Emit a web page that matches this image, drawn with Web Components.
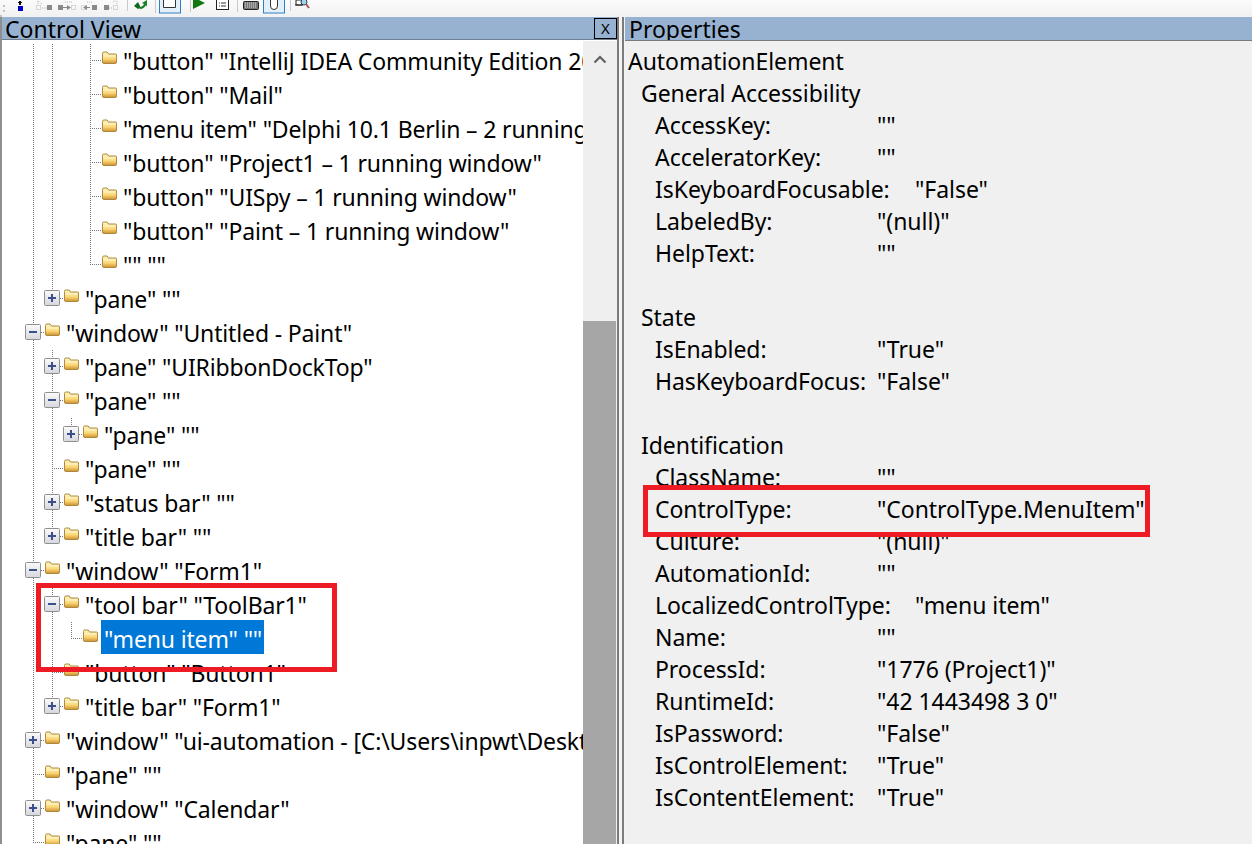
<!DOCTYPE html>
<html>
<head>
<meta charset="utf-8">
<title>UISpy</title>
<style>
html, body { margin: 0; height: 100%; overflow: hidden; background: #fff; }
body { font-family: "Noto Sans", "Open Sans", sans-serif; color: #000; }
</style>
</head>
<body>
<spy-app>
  <spy-toolbar slot="toolbar"></spy-toolbar>

  <spy-panel slot="left" heading="Control View" closable>
    <spy-tree>
      <tree-row guides="0,1" level="3" line="tee">"button" "IntelliJ IDEA Community Edition 2022.1 – 1 running window"</tree-row>
      <tree-row guides="0,1" level="3" line="tee">"button" "Mail"</tree-row>
      <tree-row guides="0,1" level="3" line="tee">"menu item" "Delphi 10.1 Berlin – 2 running windows"</tree-row>
      <tree-row guides="0,1" level="3" line="tee">"button" "Project1 – 1 running window"</tree-row>
      <tree-row guides="0,1" level="3" line="tee">"button" "UISpy – 1 running window"</tree-row>
      <tree-row guides="0,1" level="3" line="tee">"button" "Paint – 1 running window"</tree-row>
      <tree-row guides="0,1" level="3" line="end">"" ""</tree-row>
      <tree-row guides="0" level="1" line="end" toggle="plus">"pane" ""</tree-row>
      <tree-row level="0" line="tee" toggle="minus">"window" "Untitled - Paint"</tree-row>
      <tree-row guides="0" level="1" line="tee" toggle="plus">"pane" "UIRibbonDockTop"</tree-row>
      <tree-row guides="0" level="1" line="tee" toggle="minus">"pane" ""</tree-row>
      <tree-row guides="0,1" level="2" line="end" toggle="plus">"pane" ""</tree-row>
      <tree-row guides="0" level="1" line="tee">"pane" ""</tree-row>
      <tree-row guides="0" level="1" line="tee" toggle="plus">"status bar" ""</tree-row>
      <tree-row guides="0" level="1" line="end" toggle="plus">"title bar" ""</tree-row>
      <tree-row level="0" line="tee" toggle="minus">"window" "Form1"</tree-row>
      <tree-row guides="0" level="1" line="tee" toggle="minus">"tool bar" "ToolBar1"</tree-row>
      <tree-row guides="0,1" level="2" line="end" selected>"menu item" ""</tree-row>
      <tree-row guides="0" level="1" line="tee">"button" "Button1"</tree-row>
      <tree-row guides="0" level="1" line="end" toggle="plus">"title bar" "Form1"</tree-row>
      <tree-row level="0" line="tee" toggle="plus">"window" "ui-automation - [C:\Users\inpwt\Desktop\ui-automation]"</tree-row>
      <tree-row level="0" line="tee">"pane" ""</tree-row>
      <tree-row level="0" line="tee" toggle="plus">"window" "Calendar"</tree-row>
      <tree-row level="0" line="tee">"pane" ""</tree-row>
    </spy-tree>
    <red-box style="left:34px;top:542px;width:301px;height:89px"></red-box>
  </spy-panel>

  <spy-panel slot="right" heading="Properties">
    <prop-list>
      <prop-line kind="root">AutomationElement</prop-line>
      <prop-line kind="group">General Accessibility</prop-line>
      <prop-line name="AccessKey:">""</prop-line>
      <prop-line name="AcceleratorKey:">""</prop-line>
      <prop-line name="IsKeyboardFocusable:" wide>"False"</prop-line>
      <prop-line name="LabeledBy:">"(null)"</prop-line>
      <prop-line name="HelpText:">""</prop-line>
      <prop-line kind="blank"></prop-line>
      <prop-line kind="group">State</prop-line>
      <prop-line name="IsEnabled:">"True"</prop-line>
      <prop-line name="HasKeyboardFocus:">"False"</prop-line>
      <prop-line kind="blank"></prop-line>
      <prop-line kind="group">Identification</prop-line>
      <prop-line name="ClassName:">""</prop-line>
      <prop-line name="ControlType:">"ControlType.MenuItem"</prop-line>
      <prop-line name="Culture:">"(null)"</prop-line>
      <prop-line name="AutomationId:">""</prop-line>
      <prop-line name="LocalizedControlType:" wide>"menu item"</prop-line>
      <prop-line name="Name:">""</prop-line>
      <prop-line name="ProcessId:">"1776 (Project1)"</prop-line>
      <prop-line name="RuntimeId:">"42 1443498 3 0"</prop-line>
      <prop-line name="IsPassword:">"False"</prop-line>
      <prop-line name="IsControlElement:">"True"</prop-line>
      <prop-line name="IsContentElement:">"True"</prop-line>
    </prop-list>
    <red-box style="left:18px;top:444px;width:507px;height:52px"></red-box>
  </spy-panel>
</spy-app>

<script>
// app frame: toolbar on top, two panels with the splitter between them
class SpyApp extends HTMLElement {
  constructor() {
    super();
    this.attachShadow({ mode: "open" });
    this.shadowRoot.innerHTML = `
    <style>
      :host { display: flex; flex-direction: column; height: 844px; width: 1252px; overflow: hidden; }
      #panes { flex: 1; min-height: 0; display: flex; background: #fff; }
      #left { display: flex; width: 617px; flex: none; min-height: 0; }
      #split { flex: none; width: 8px; display: flex; }
      #split i { display: block; }
      #right { display: flex; flex: 1; min-width: 0; min-height: 0; }
    </style>
    <slot name="toolbar"></slot>
    <div id="panes">
      <div id="left"><slot name="left"></slot></div>
      <div id="split">
        <i style="width:2px;background:#7b7b7b"></i>
        <i style="width:3px;background:#f3f3f3"></i>
        <i style="width:2px;background:#7b7b7b"></i>
        <i style="width:1px;background:#f3f3f3"></i>
      </div>
      <div id="right"><slot name="right"></slot></div>
    </div>`;
  }
}

// top toolbar, it is cut off by the screenshot so only the bottom of the icons shows
class SpyToolbar extends HTMLElement {
  constructor() {
    super();
    this.attachShadow({ mode: "open" });
    this.shadowRoot.innerHTML = `
    <style>
      :host { display: block; height: 17px; flex: none; background: linear-gradient(#fbfbfb, #f1f1f1); overflow: hidden; }
      svg { display: block; }
    </style>
    <svg width="330" height="17" viewBox="0 0 330 17">
      <path d="M3 5h2v2H3zM3 10h2v2H3zM0 15h2v2H0z" fill="#c4c4c4"/>
      <path d="M20 1v4" stroke="#111" stroke-width="2" fill="none"/><path d="M18 3h4v-1h-4z" fill="#111"/>
      <rect x="18" y="6" width="5" height="5" fill="#0000c8"/>
      <!-- the four greyed out move buttons -->
      <g fill="none" stroke="#b4b4b4">
        <path d="M36.500 5.500h4v4h-4zM71.500 5.500h4v4h-4zM81.500 5.500h4v4h-4zM113.500 5.500h4v4h-4z" stroke-dasharray="1 1"/>
        <path d="M42 8h5M109 8h4M38 4V0M38 1l4 3M65 2h8M87 2h6M113 2l3-2M117 4V0" stroke-dasharray="1 1"/>
      </g>
      <g fill="#8a8a8a">
        <path d="M47 5h5v5h-5zM58 5h5v5h-5zM92 5h5v5h-5zM104 5h5v5h-5z"/>
        <path d="M63 7h4V5l4 2.500-4 2.500V8h-4zM90 7h-3V5l-4 2.500 4 2.500V8h3z"/>
      </g>
      <path d="M127.500 0v11M155.500 0v13M190.500 0v12M237.500 0v12M290.500 0v11" stroke="#c9c9c9"/>
      <!-- refresh -->
      <path d="M134 6l4-4 1 2 1 2v2l-2 1z" fill="#0f6a1f"/>
      <path d="M139 7q4 0 5-3l-2-1 5-3v7l-1-2q-2 4-6 4z" fill="#17812a"/>
      <rect x="159.500" y="-4" width="21" height="17" fill="#e4eff9" stroke="#2f80c8"/>
      <path d="M163.500 0v7.500h12V0" fill="#fff" stroke="#333"/>
      <path d="M193 0v9l12-6-6-3z" fill="#127812"/>
      <rect x="216.500" y="-1" width="12" height="10.500" fill="#fff" stroke="#222"/>
      <path d="M219 3h1M219 6h1M221 3h5M221 6h5" stroke="#333"/>
      <rect x="243.500" y="1.500" width="15" height="8" rx="1" fill="#777" stroke="#222"/>
      <path d="M245 3h12M245 5h12M245 7h12" stroke="#ddd" stroke-dasharray="1 1"/>
      <rect x="263.500" y="-4" width="21" height="17" fill="#e4eff9" stroke="#2f80c8"/>
      <path d="M270.500 0v6q0 3.500 3.500 3.500t3.500-3.500V0" fill="#fff" stroke="#333"/>
      <path d="M296 0h6v5h-6z" fill="#fff" stroke="#222"/>
      <circle cx="304" cy="2" r="3" fill="#9ed3ee" stroke="#345"/>
      <path d="M306 4l3 4" stroke="#a55" stroke-width="2"/>
      <path d="M295 5h8" stroke="#222"/>
    </svg>`;
  }
}

const panelTemplate = document.createElement("template");
panelTemplate.innerHTML = `
<style>
  :host { display: flex; flex-direction: column; flex: 1; min-width: 0; border-left: 2px solid #8f8f8f; box-sizing: border-box; }
  #head { flex: none; height: 22px; background: #97b2d0; border-bottom: 1px solid #6e7f90; display: flex; align-items: center; justify-content: space-between; }
  #title { font-size: 23px; line-height: 22px; padding: 2px 0 0 3px; white-space: nowrap; }
  #close { display: none; width: 21px; height: 19px; border: 1px solid #000; font-size: 15px; line-height: 18px; text-align: center; }
  :host([closable]) #close { display: block; }
  #gap { flex: none; height: 1px; background: #fff; }
  :host([heading="Properties"]) { border-left: 0; }
  :host([heading="Properties"]) #gap { background: #7b7b7b; }
  :host([heading="Properties"]) #head { border-bottom: 0; height: 23px; }
  :host([heading="Properties"]) #title { padding: 0 0 0 4px; }
  #body { flex: 1; min-height: 0; position: relative; overflow: hidden; }
</style>
<div id="head"><div id="title"></div><div id="close">X</div></div>
<div id="gap"></div>
<div id="body"><slot></slot></div>`;

class SpyPanel extends HTMLElement {
  constructor() {
    super();
    this.attachShadow({ mode: "open" });
    this.shadowRoot.appendChild(panelTemplate.content.cloneNode(true));
  }
  connectedCallback() {
    this.shadowRoot.querySelector("#title").textContent = this.getAttribute("heading");
  }
}

// tree with scrollbar on the right
class SpyTree extends HTMLElement {
  constructor() {
    super();
    this.attachShadow({ mode: "open" });
    this.shadowRoot.innerHTML = `
    <style>
      :host { display: flex; height: 100%; background: #fff; }
      #rows { flex: 1; min-width: 0; overflow: hidden; padding-top: 3px; }
      #bar { flex: none; width: 34px; background: #efefef; display: flex; flex-direction: column; }
      #up { height: 280px; display: flex; justify-content: center; padding-top: 14px; box-sizing: border-box; }
      #thumb { flex: 1; background: #a6a6a6; margin-right: 1px; }
    </style>
    <div id="rows"><slot></slot></div>
    <div id="bar">
      <div id="up"><svg width="14" height="9" viewBox="0 0 14 9"><path d="M1.500 7.500L7 2l5.500 5.500" fill="none" stroke="#606060" stroke-width="2.200"/></svg></div>
      <div id="thumb"></div>
    </div>`;
  }
}

const dot = "repeating-linear-gradient(to bottom, #777 0 1px, transparent 1px 2px)";
const dotH = "repeating-linear-gradient(to right, #777 0 1px, transparent 1px 2px)";

class TreeRow extends HTMLElement {
  constructor() {
    super();
    this.attachShadow({ mode: "open" });
  }
  connectedCallback() {
    const level = +this.getAttribute("level");
    const guides = (this.getAttribute("guides") || "").split(",").filter(x => x !== "").map(Number);
    const line = this.getAttribute("line");
    const toggle = this.getAttribute("toggle");
    let cells = "";
    for (let i = 0; i < level; i++) {
      cells += `<span class="cell ${guides.includes(i) ? "guide" : ""}"></span>`;
    }
    let box = "";
    if (toggle) {
      box = `<svg class="exp" width="16" height="16" viewBox="0 0 16 16">
        <defs><linearGradient id="g" x1="0" y1="0" x2="0" y2="1"><stop offset="0" stop-color="#fbfbfb"/><stop offset="1" stop-color="#d6d6de"/></linearGradient></defs>
        <rect x="0.500" y="0.500" width="15" height="15" rx="1" fill="url(#g)" stroke="#8f8f8f"/>
        <path d="${toggle === "plus" ? "M4 8h8M8 4v8" : "M4 8h8"}" stroke="#3b4f8c" stroke-width="2"/>
      </svg>`;
    }
    this.shadowRoot.innerHTML = `
    <style>
      :host { display: block; height: 34px; }
      #row { display: flex; height: 34px; align-items: stretch; white-space: nowrap; }
      #pad { flex: none; width: 21px; }
      .cell { flex: none; width: 19px; background-repeat: no-repeat; }
      .guide { background-image: ${dot}; background-size: 1px 100%; background-position: 10px 0; }
      .tee, .end { display: flex; align-items: center; box-sizing: border-box; padding-left: 2px; width: 22px; margin-right: -3px;
        background-image: ${dot}, ${dotH};
        background-size: 1px 100%, 12px 1px;
        background-position: 10px 0, 10px 16px; }
      .end { background-size: 1px 17px, 12px 1px; }
      .exp { display: block; margin-top: -2px; }
      .folder { flex: none; display: flex; align-items: center; box-sizing: border-box; width: 19px; padding-left: 3px; }
      .folder svg { display: block; margin-top: -7px; }
      #text { margin-left: 2px; height: 28px; align-self: center; padding: 0 2px 0 3px; font-size: 23px; line-height: 28px; letter-spacing: -0.15px; }
      :host([selected]) #text { background: #0078d7; color: #fff; align-self: flex-start; height: 34px; line-height: 38px; margin-top: -2px; }
    </style>
    <div id="row">
      <span id="pad"></span>${cells}
      <span class="cell ${line}">${box}</span>
      <span class="folder"><svg width="15" height="13" viewBox="0 0 16 13" preserveAspectRatio="none">
        <defs><linearGradient id="f" x1="0" y1="0" x2="0" y2="1"><stop offset="0" stop-color="#fff4c0"/><stop offset="0.600" stop-color="#fbd877"/><stop offset="1" stop-color="#d0902f"/></linearGradient></defs>
        <path d="M0.500 2.500Q0.500 1 2 1h3.500l1.500 2h7.500q1 0 1 1v7q0 1.500-1.500 1.500H2Q0.500 12.500 0.500 11z" fill="url(#f)" stroke="#a8863c"/>
        <path d="M1.500 5h13" stroke="#fff8d8"/>
      </svg></span>
      <span id="text"><slot></slot></span>
    </div>`;
  }
}

class PropList extends HTMLElement {
  constructor() {
    super();
    this.attachShadow({ mode: "open" });
    this.shadowRoot.innerHTML = `
    <style>
      :host { display: block; height: 100%; background: #f0f0f0; padding-top: 4px; box-sizing: border-box; }
    </style>
    <slot></slot>`;
  }
}

class PropLine extends HTMLElement {
  constructor() {
    super();
    this.attachShadow({ mode: "open" });
    this.shadowRoot.innerHTML = `
    <style>
      :host { display: flex; height: 32px; line-height: 32px; font-size: 23px; letter-spacing: -0.05px; white-space: nowrap; padding-left: 30px; }
      :host([kind="root"]) { padding-left: 3px; }
      :host([kind="group"]) { padding-left: 16px; }
      #name { width: 222px; flex: none; }
      :host([wide]) #name { width: 260px; }
      :host([kind]) #name { display: none; }
    </style>
    <span id="name"></span><span><slot></slot></span>`;
  }
  connectedCallback() {
    this.shadowRoot.querySelector("#name").textContent = this.getAttribute("name") || "";
  }
}

// red annotation rectangle painted over the screenshot
class RedBox extends HTMLElement {
  constructor() {
    super();
    this.attachShadow({ mode: "open" });
    this.shadowRoot.innerHTML = `<style>:host { display: block; position: absolute; box-sizing: border-box; border: 5px solid #ed1c24; }</style>`;
  }
}

customElements.define("spy-app", SpyApp);
customElements.define("spy-toolbar", SpyToolbar);
customElements.define("spy-panel", SpyPanel);
customElements.define("spy-tree", SpyTree);
customElements.define("tree-row", TreeRow);
customElements.define("prop-list", PropList);
customElements.define("prop-line", PropLine);
customElements.define("red-box", RedBox);
</script>
</body>
</html>
